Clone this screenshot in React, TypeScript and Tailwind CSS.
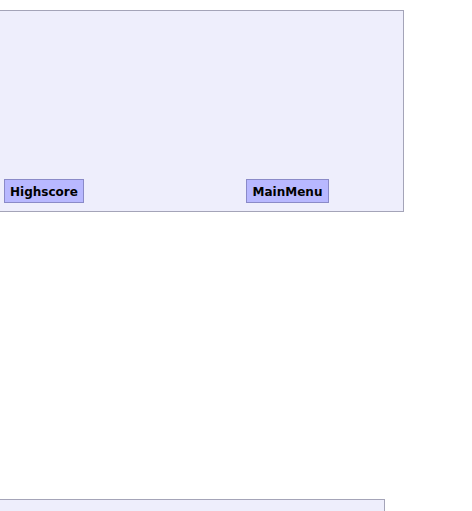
// @ts-nocheck
import React from 'react'

function PanelButton({ label, className = '' }: { label: string; className?: string }) {
  return (
    <button
      className={`h-6 border border-[#8a8ac8] bg-[#b8b8ff] px-[5px] pt-px text-[12px] font-bold leading-none text-black ${className}`}
    >
      {label}
    </button>
  )
}

export default function App() {
  return (
    <div className="min-h-[511px] bg-white font-['DejaVu_Sans',sans-serif]">
      <div className="h-[10px]" />
      {/* game panel */}
      <div className="flex h-[202px] w-[404px] flex-col justify-end border-y border-r border-[#a4a4b8] bg-[#eeeefc] pb-2 pl-1">
        <div className="flex items-end">
          <PanelButton label="Highscore" className="w-[80px]" />
          <PanelButton label="MainMenu" className="ml-[162px] w-[83px]" />
        </div>
      </div>
      <div className="h-[287px]" />
      {/* next panel, cut off */}
      <div className="h-[20px] w-[385px] border-t border-r border-[#a4a4b8] bg-[#eeeefc]" />
    </div>
  )
}
